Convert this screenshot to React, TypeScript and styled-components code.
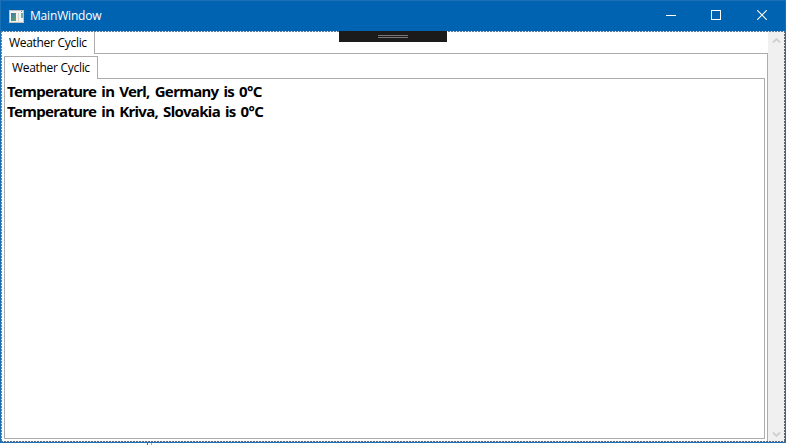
import React from "react";
import styled, { createGlobalStyle } from "styled-components";

const Global = createGlobalStyle`
  *, *::before, *::after { box-sizing: border-box; }
  body { margin: 0; background: #fff; overflow: hidden; }
  body, #root { font-family: "Open Sans", "Noto Sans", sans-serif; }
`;

const Desktop = styled.div`
  width: 786px;
  height: 445px;
  background: #fff;
`;

const Window = styled.div`
  width: 786px;
  height: 443px;
  display: flex;
  flex-direction: column;
  border: 1px solid #1a6fb5;
`;

const TitleBar = styled.header`
  height: 30px;
  flex: none;
  display: flex;
  align-items: center;
  background: #0063b1;
  color: #fff;
  padding-left: 8px;
`;

const Title = styled.span`
  flex: 1;
  margin-left: 6px;
  font-size: 12px;
  line-height: 16px;
  letter-spacing: -0.18px;
`;

const CaptionButton = styled.button<{ $width: number }>`
  width: ${(p) => p.$width}px;
  height: 30px;
  padding: 0 0 2px;
  border: 0;
  background: transparent;
  color: #fff;
  display: flex;
  align-items: center;
  justify-content: center;
`;

const dash = (dir: string) =>
  `repeating-linear-gradient(${dir}, #5c6873 0 2px, #e6ecf2 2px 3px)`;

const Client = styled.main`
  position: relative;
  flex: 1;
  min-height: 0;
  display: flex;
  padding: 0 1px 1px;
  background:
    ${dash("to right")} bottom / 100% 1px no-repeat,
    ${dash("to bottom")} right / 1px 100% no-repeat,
    repeating-linear-gradient(to bottom, #4d86b8 0 2px, #e6ecf2 2px 3px) left / 1px 100% no-repeat,
    #fff;

  &::before {
    content: "";
    position: absolute;
    inset: 0 0 auto;
    height: 1px;
    background: repeating-linear-gradient(to right, #567a9c 0 2px, #e6ecf2 2px 3px);
  }
`;

const TabControl = styled.section`
  flex: 1;
  min-width: 0;
  display: flex;
  flex-direction: column;
`;

const TabStrip = styled.div`
  flex: none;
  display: flex;
  height: 23px;

  &::after {
    content: "";
    flex: 1;
    border-bottom: 1px solid #acacac;
  }
`;

const Tab = styled.div<{ $outer?: boolean }>`
  width: ${(p) => (p.$outer ? 93 : 94)}px;
  padding-left: 7px;
  border: 1px solid #acacac;
  border-bottom: 0;
  ${(p) => p.$outer && "border-top: 0; border-left: 0;"}
  font-size: 12px;
  line-height: ${(p) => (p.$outer ? 24 : 22)}px;
  letter-spacing: -0.3px;
  white-space: nowrap;
  color: #000;
`;

const OuterPanel = styled.div`
  flex: 1;
  min-height: 0;
  display: flex;
  padding: 2px 2px 2px;
  border-right: 1px solid #acacac;
`;

const InnerPanel = styled.div`
  flex: 1;
  padding: 2px 2px;
  border: 1px solid #acacac;
  border-top: 0;
`;

const Reading = styled.p`
  margin: 0;
  font-family: "Noto Sans", "Open Sans", sans-serif;
  font-size: 15px;
  font-weight: 700;
  line-height: 20px;
  letter-spacing: -0.66px;
  word-spacing: 1.7px;
  white-space: nowrap;
  color: #000;
`;

const ScrollBar = styled.aside`
  width: 16px;
  flex: none;
  display: flex;
  flex-direction: column;
  align-items: center;
  justify-content: space-between;
  padding: 6px 0 3px;
  background: #f0f0f0;
`;

const DebugBar = styled.div`
  position: absolute;
  left: 338px;
  top: 0;
  width: 108px;
  height: 11px;
  background: #1b1b1b;
  display: flex;
  flex-direction: column;
  align-items: center;
  gap: 1px;
  padding-top: 4px;
`;

const GripLine = styled.i`
  width: 30px;
  height: 1px;
  background: #7b7474;
`;

const Fragments = styled.div`
  display: flex;
  gap: 1px;
  height: 2px;
  padding-left: 147px;
`;

const Fragment = styled.i<{ $color: string }>`
  width: 1px;
  height: 2px;
  background: ${(p) => p.$color};
`;

const AppIcon = () => (
  <svg width="15" height="13" viewBox="0 0 15 13" shapeRendering="crispEdges">
    <defs>
      <linearGradient id="pane" x1="0" y1="0" x2="1" y2="1">
        <stop offset="0" stopColor="#3f78a8" />
        <stop offset="1" stopColor="#5aa56f" />
      </linearGradient>
    </defs>
    <rect width="15" height="13" fill="#c4c0bc" />
    <rect x="1" y="1" width="13" height="11" fill="#f3f3f3" />
    <rect x="2" y="3" width="5" height="8" fill="url(#pane)" />
    <rect x="9" y="3" width="1" height="8" fill="#d2d2d2" />
    <rect x="12" y="3" width="2" height="5" fill="#78a99c" />
    <rect x="12" y="1" width="1" height="1" fill="#888" />
  </svg>
);

const Chevron = ({ down }: { down?: boolean }) => (
  <svg width="9" height="7" viewBox="0 0 9 7">
    <path
      d={down ? "M1 1.5 L4.5 5 L8 1.5" : "M1 5.5 L4.5 2 L8 5.5"}
      fill="none"
      stroke="#d0d0d0"
      strokeWidth="1.8"
    />
  </svg>
);

const readings = [
  "Temperature in Verl, Germany is 0°C",
  "Temperature in Kriva, Slovakia is 0°C",
];

export default function App() {
  return (
    <Desktop>
      <Global />
      <Window>
        <TitleBar>
          <AppIcon />
          <Title>MainWindow</Title>
          <CaptionButton $width={45} aria-label="Minimize">
            <svg width="10" height="10" shapeRendering="crispEdges">
              <path d="M0 5.5H10" stroke="currentColor" />
            </svg>
          </CaptionButton>
          <CaptionButton $width={46} aria-label="Maximize">
            <svg width="10" height="10" shapeRendering="crispEdges">
              <rect x="0.5" y="0.5" width="9" height="9" fill="none" stroke="currentColor" />
            </svg>
          </CaptionButton>
          <CaptionButton $width={46} aria-label="Close">
            <svg width="10" height="10">
              <path d="M0.2 0.2L9.8 9.8M9.8 0.2L0.2 9.8" stroke="currentColor" strokeWidth="1.1" />
            </svg>
          </CaptionButton>
        </TitleBar>
        <Client>
          <TabControl>
            <TabStrip>
              <Tab $outer>Weather Cyclic</Tab>
            </TabStrip>
            <OuterPanel>
              <TabControl>
                <TabStrip>
                  <Tab>Weather Cyclic</Tab>
                </TabStrip>
                <InnerPanel>
                  {readings.map((r) => (
                    <Reading key={r}>{r}</Reading>
                  ))}
                </InnerPanel>
              </TabControl>
            </OuterPanel>
          </TabControl>
          <ScrollBar>
            <Chevron />
            <Chevron down />
          </ScrollBar>
          <DebugBar>
            <GripLine />
            <GripLine />
          </DebugBar>
        </Client>
      </Window>
      <Fragments>
        <Fragment $color="#2f6fa8" />
        <Fragment $color="#fff" />
        <Fragment $color="#a0a8b0" />
      </Fragments>
    </Desktop>
  );
}
